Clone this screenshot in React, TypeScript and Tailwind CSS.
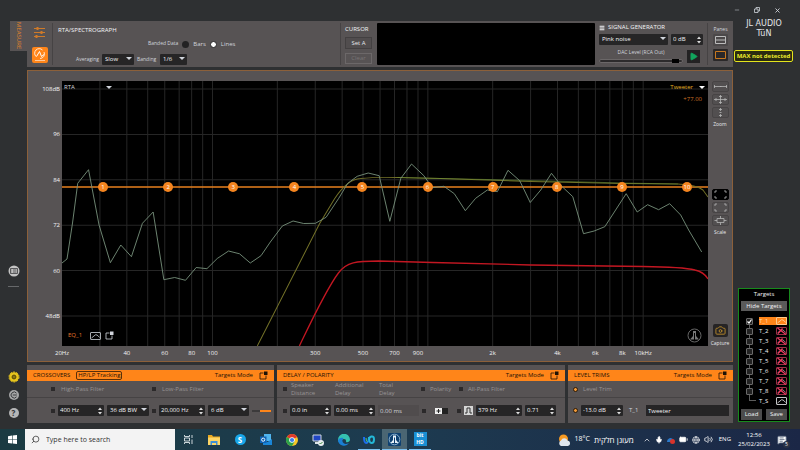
import React, { useState } from 'react';
import { Search, Minus, X, Play, Camera, Menu, Volume2, Mic, BatteryFull, ChevronUp, Globe, MessageSquareText } from 'lucide-react';
import clsx from 'clsx';

type Point = [number, number];

// plot area in svg units
const PLOT_W = 645;
const PLOT_H = 265;

const freqToX = (freq: number) => (Math.log10(freq / 20) / 3) * PLOT_W;
const dbToY = (db: number) => 8 + ((108 - db) / 12) * 45.4;

const gridFreqs = [1, 2, 3, 4, 5, 6, 7, 8, 9].flatMap((n) => [n * 10, n * 100, n * 1000]).concat(10000).filter((f) => f > 20);

const freqLabels = [
    { freq: 20, text: '20Hz' },
    { freq: 40, text: '40' },
    { freq: 60, text: '60' },
    { freq: 80, text: '80' },
    { freq: 100, text: '100' },
    { freq: 300, text: '300' },
    { freq: 500, text: '500' },
    { freq: 700, text: '700' },
    { freq: 900, text: '900' },
    { freq: 2000, text: '2k' },
    { freq: 4000, text: '4k' },
    { freq: 6000, text: '6k' },
    { freq: 8000, text: '8k' },
    { freq: 10000, text: '10kHz' },
];

const dbLabels = [
    { db: 108, text: '108dB' },
    { db: 96, text: '96' },
    { db: 84, text: '84' },
    { db: 72, text: '72' },
    { db: 60, text: '60' },
    { db: 48, text: '48dB' },
];

const rta: Point[] = [
    [0, 182], [5, 178], [10.5, 142], [15.7, 102.3], [26.5, 88.7], [37, 144], [48.3, 181.7], [58.7, 164], [69.3, 175.7],
    [80.3, 142.3], [91, 131], [101.7, 198.7], [112.5, 196.5], [123.3, 199.3], [134, 186.5], [144.7, 187.7], [155, 177.5],
    [166.3, 170], [177.3, 172.8], [188, 182], [198.7, 174.7], [208, 161], [220, 145], [230.7, 140], [241.3, 142.5],
    [253, 142.3], [263.7, 136.3], [276.3, 117.3], [285.3, 102.3], [294.7, 95.3], [305.7, 92], [316.7, 94.7], [327.3, 140.3],
    [338.3, 97.3], [349, 83], [361.3, 94.7], [369.7, 106.7], [381.3, 105.3], [391.7, 112.7], [402.7, 129.7], [413, 117.3],
    [424.7, 109], [434.7, 110.7], [445.3, 89.3], [457, 99.7], [467.5, 121.5], [478, 109], [488.7, 92.3], [498.7, 105],
    [510, 115.7], [520.7, 152.7], [531.3, 150], [542, 145.7], [563.3, 112.7], [574.3, 131], [584.7, 123.7], [595.7, 128.7],
    [606.7, 122.7], [617.7, 134], [625.7, 149], [638.7, 171],
];

const eqNodes = [41, 106, 171, 232, 300, 365, 430, 494, 559, 624];

const targets = ['T_1', 'T_2', 'T_3', 'T_4', 'T_5', 'T_6', 'T_7', 'T_8', 'T_S'];

const Caret: React.FC<{ className?: string }> = ({ className }) => (
    <svg viewBox="0 0 6 3" className={clsx('h-[3px] w-[6px] shrink-0', className)}>
        <path d="M0 0h6L3 3z" fill="currentColor" />
    </svg>
);

const PopOut = () => (
    <svg viewBox="0 0 9 9" className="size-[9px] shrink-0" fill="none">
        <path d="M4.500 2H1v6h6V4.500" stroke="currentColor" strokeWidth=".8" />
        <path d="M5 .5h3.500v3.500H5z" fill="currentColor" />
    </svg>
);

const Select: React.FC<{ id: string; value: string; className?: string }> = ({ id, value, className }) => (
    <div className={clsx('relative shrink-0', className)}>
        <select id={id} aria-label={id} className="block h-[11px] w-full appearance-none rounded-[1px] bg-[#262526] pl-[3px] text-[6px] leading-[11px] text-gray-100">
            <option>{value}</option>
        </select>
        <Caret className="pointer-events-none absolute top-[3px] right-[2px] text-gray-300" />
    </div>
);

const Spin: React.FC<{ label: string; value: string; className?: string }> = ({ label, value, className }) => (
    <div className={clsx('flex h-[11px] shrink-0 items-center rounded-[1px] bg-[#262526] pr-[2px]', className)}>
        <input aria-label={label} defaultValue={value} className="h-[11px] w-0 min-w-0 flex-1 pl-[2px] text-[6px] leading-[11px] text-gray-100" />
        <button title="step" className="flex h-[11px] items-center">
            <svg viewBox="0 0 4 8" className="h-[8px] w-[4px]" fill="#ddd">
                <path d="M0 3l2-2.500L4 3zM0 5l2 2.500L4 5z" />
            </svg>
        </button>
    </div>
);

const Tick: React.FC<{ label: string }> = ({ label }) => (
    <input type="checkbox" aria-label={label} className="size-[4px] shrink-0 appearance-none bg-[#2b292a]" />
);

const Led = () => (
    <input type="checkbox" aria-label="led" defaultChecked className="size-[5px] shrink-0 appearance-none rounded-full border border-[#2b1a08] bg-[#f19a38]" />
);

const ModuleHeader: React.FC<{ title: string; children?: React.ReactNode }> = ({ title, children }) => (
    <div className="mt-[5px] flex h-[11px] items-center gap-[6px] bg-[#ff8519] px-[6px] text-[#1e1206]">
        <h2 className="text-[6px] whitespace-nowrap">{title}</h2>
        {children}
        <span className="ml-auto text-[6px] whitespace-nowrap">Targets Mode</span>
        <PopOut />
    </div>
);

const CurveIcon: React.FC<{ off?: boolean }> = ({ off }) => (
    <svg viewBox="0 0 11 8" className="h-[8px] w-[11px] shrink-0" fill="none">
        <rect x=".5" y=".5" width="10" height="7" rx=".5" stroke={off ? '#c43a58' : 'currentColor'} strokeWidth=".8" />
        <path d="M1.500 6L4 4Q5.500 2 7 3T9.500 5.500" stroke={off ? '#c9a0a8' : 'currentColor'} strokeWidth=".8" />
        {off && <path d="M1.500 1l8.500 6.500M6.500 1.500L2 6.500" stroke="#f03a60" strokeWidth="1.200" />}
    </svg>
);

const Rail = () => (
    <aside className="flex w-[27px] shrink-0 flex-col items-center pt-[21px] pb-[10px] text-[#bdbdbd]">
        <button className="flex h-[30px] w-[17px] items-center justify-center self-end bg-[#575354] text-[6px] leading-[8px] text-[#e0842c] [writing-mode:vertical-rl]">
            MEASURE
        </button>
        <button title="list" className="mt-auto">
            <svg viewBox="0 0 12 12" className="size-[12px]">
                <circle cx="6" cy="6" r="5.500" fill="#c4c4c4" />
                <path d="M2.500 3.500h7v5h-7zM5 5h3.500M5 7h3.500M3.500 5h.6M3.500 7h.6" stroke="#3d3e40" strokeWidth=".8" fill="none" />
            </svg>
        </button>
        <hr className="mt-[9px] mb-[84px] w-[11px] border-[#66686a]" />
        <div className="flex flex-col gap-[6px]">
            <button title="settings">
                <svg viewBox="0 0 12 12" className="size-[12px]" fill="none">
                    <circle cx="6" cy="6" r="4.800" fill="#e8c51c" />
                    <circle cx="6" cy="6" r="5" stroke="#e8c51c" strokeDasharray="2 1.140" />
                    <circle cx="6" cy="6" r="2" fill="#4a3d06" stroke="#6e5c0c" />
                    <circle cx="6" cy="6" r=".8" fill="#e8c51c" />
                </svg>
            </button>
            <button title="connect">
                <svg viewBox="0 0 12 12" className="size-[12px]" fill="none">
                    <circle cx="6" cy="6" r="5" fill="#a5a6a7" />
                    <path d="M8.500 4.200A3 3 0 1 0 8.500 7.800M4.800 6h4" stroke="#3b3d3f" />
                </svg>
            </button>
            <button title="help" className="flex size-[12px] items-center justify-center">
                <span className="flex size-[10px] items-center justify-center rounded-full bg-[#b5b6b7] text-[8px] leading-[10px] font-bold text-[#2e3032]">?</span>
            </button>
        </div>
    </aside>
);

const TopBar = () => (
    <header className="flex h-[46px] bg-[#575354] py-[2px]">
        <div className="flex w-[26px] shrink-0 flex-col items-center justify-between border-r border-[#464344] py-[2px]">
            <button title="mixer">
                <svg viewBox="0 0 13 14" className="h-[14px] w-[13px]" fill="none" stroke="#cf7a28">
                    <path d="M1 3.500h11M1 7.500h11M1 11.500h11" />
                    <path d="M4.500 2v3M8.500 6v3M3.500 10v3" strokeWidth="2" />
                </svg>
            </button>
            <button title="spectrograph">
                <svg viewBox="0 0 16 16" className="size-[16px]" fill="none" stroke="#fff">
                    <rect width="16" height="16" rx="2" fill="#ff8519" stroke="none" />
                    <path d="M4 9.500A4.500 4.500 0 0 1 10.500 3M12 5a4.500 4.500 0 0 1-4 6.500" strokeWidth=".8" />
                    <path d="M4.500 9.500L7.500 4.500l2 5 2.500-2" />
                    <path d="M3 13.500h10" strokeWidth=".8" strokeOpacity=".7" />
                </svg>
            </button>
        </div>

        <section className="flex w-[288px] shrink-0 flex-col gap-[6px] border-r border-[#464344] pt-[3px] pl-[5px] text-gray-300">
            <h1 className="text-[6px] leading-[8px] text-gray-100">RTA/SPECTROGRAPH</h1>
            <div className="flex h-[8px] items-center pl-[90px] text-[6px]">
                <span className="text-[5px]">Banded Data</span>
                <label className="ml-[4px] flex items-center gap-[4px]">
                    <input type="radio" name="band" className="size-[7px] appearance-none rounded-full bg-[#232223]" />
                    Bars
                </label>
                <label className="ml-[4px] flex items-center gap-[4px]">
                    <input type="radio" name="band" defaultChecked className="size-[7px] appearance-none rounded-full border border-[#232223] bg-white" />
                    Lines
                </label>
            </div>
            <div className="flex items-center pl-[18px] text-[5px]">
                <label htmlFor="averaging" className="w-[26px]">Averaging</label>
                <Select id="averaging" value="Slow" className="w-[32px]" />
                <label htmlFor="banding" className="w-[26px] pl-[3px]">Banding</label>
                <Select id="banding" value="1/6" className="w-[27px]" />
            </div>
        </section>

        <section className="flex w-[36px] shrink-0 flex-col gap-[4px] pt-[2px] pl-[4px]">
            <h2 className="text-[6px] leading-[8px] text-gray-100">CURSOR</h2>
            <button className="h-[12px] w-[27px] border border-[#434041] bg-[#514d4e] text-[6px] leading-[10px] text-gray-200">Set A</button>
            <button disabled className="h-[11px] w-[27px] border border-[#6c6869] text-[6px] leading-[9px] text-[#777374]">Clear</button>
        </section>

        <div className="flex-1 rounded-[1px] bg-black" />

        <section className="flex w-[112px] shrink-0 flex-col pl-[4px]">
            <h2 className="flex h-[9px] items-center gap-[3px] text-[6px] whitespace-nowrap text-gray-100">
                <Menu size={6} strokeWidth={4} />
                SIGNAL GENERATOR
            </h2>
            <div className="mt-[2px] flex gap-[3px]">
                <Select id="signal" value="Pink noise" className="w-[69px]" />
                <Spin label="level" value="0 dB" className="w-[32px]" />
            </div>
            <div className="mt-[4px] flex items-center justify-between pr-[7px]">
                <label className="flex w-[84px] flex-col items-center gap-[3px] text-[5px] leading-[7px] text-gray-300">
                    DAC Level (RCA Out)
                    <input
                        type="range"
                        defaultValue={96}
                        className="h-[4px] w-full appearance-none rounded-full border border-[#6b6768] bg-[#2d2b2c] [&::-webkit-slider-thumb]:h-[4px] [&::-webkit-slider-thumb]:w-[7px] [&::-webkit-slider-thumb]:appearance-none [&::-webkit-slider-thumb]:bg-black"
                    />
                </label>
                <button title="play" className="flex size-[13px] items-center justify-center bg-[#232223]">
                    <Play size={9} className="fill-[#12a45c] text-[#12a45c]" />
                </button>
            </div>
        </section>

        <section className="flex w-[26px] shrink-0 flex-col items-center border-l border-[#464344] pt-[2px] text-gray-300">
            <h2 className="text-[5px] leading-[8px]">Panes</h2>
            <button title="split" className="mt-px">
                <svg viewBox="0 0 15 12" className="h-[12px] w-[15px]" fill="#4b4849" stroke="#bbb">
                    <rect width="15" height="12" rx="1" stroke="none" />
                    <path d="M2.500 2.500h10v7h-10zM2.500 6h10" />
                </svg>
            </button>
            <button title="single" className="mt-[3px]">
                <svg viewBox="0 0 15 12" className="h-[12px] w-[15px]" fill="#2a2829" stroke="#c8781f">
                    <rect width="15" height="12" rx="1" stroke="none" />
                    <path d="M2.500 2.500h10v7h-10z" />
                </svg>
            </button>
        </section>
    </header>
);

const Plot = () => (
    <div className="relative overflow-hidden bg-black">
        <svg viewBox={`0 0 ${PLOT_W} ${PLOT_H}`} preserveAspectRatio="none" className="absolute inset-0 h-full w-full" fill="none">
            <g stroke="#262626">
                {gridFreqs.map((freq) => (
                    <path key={freq} d={`M${freqToX(freq)} 0V${PLOT_H}`} />
                ))}
                {dbLabels.map(({ db }) => (
                    <path key={db} d={`M0 ${dbToY(db)}H${PLOT_W}`} />
                ))}
            </g>
            <path d="M0 106H645" stroke="#e8801e" strokeWidth="1.500" />
            <path d="M195 265L257 143L272 118Q285 98 298 97.500Q312 96 335 96.500L378 97.500L468 100.500L560 102.500L615 103Q634 104 640 109L645 116" stroke="#737128" />
            <path d="M335 96.500L378 97.500L468 99.500L560 102L615 103" stroke="#6d9a3c" strokeOpacity=".5" />
            <path d="M237 265C250 238 264 208 276 192C284 181 294 180 316 180L370 181.500L468 184L580 185.500Q620 186 632 189Q641 191 645 198" stroke="#c31722" strokeWidth="1.300" />
            <path d={`M${rta.map((p) => p.join(' ')).join('L')}`} stroke="#77917c" strokeWidth=".9" />
        </svg>

        {eqNodes.map((x, index) => (
            <button
                key={x}
                style={{ left: `${(x / PLOT_W) * 100}%` }}
                className="absolute top-[40%] flex size-[10px] -translate-x-1/2 -translate-y-1/2 items-center justify-center rounded-full bg-[#f5851f] text-[6px] leading-[10px] text-white"
            >
                {index + 1}
            </button>
        ))}

        <div className="absolute inset-x-[2px] top-[2px] flex items-start justify-between text-[6px] leading-[8px]">
            <button className="flex items-center gap-[31px] text-gray-300">
                RTA
                <Caret />
            </button>
            <div className="flex flex-col items-end gap-[4px] pr-px">
                <button className="flex items-center gap-[6px] text-[#e0ae22]">
                    Tweeter
                    <Caret className="text-white" />
                </button>
                <span className="pr-[3px] text-[#cc7326]">+77.00</span>
            </div>
        </div>

        <div className="absolute inset-x-[6px] bottom-[3px] flex items-center text-[6px] text-gray-300">
            <span className="w-[22px] text-[#e0762a]">EQ_1</span>
            <CurveIcon />
            <span className="ml-[4px]"><PopOut /></span>
            <svg viewBox="0 0 15 15" className="ml-auto size-[15px]" fill="none">
                <circle cx="7.500" cy="7.500" r="6.500" stroke="#666" />
                <path d="M6 3h3v5l3 3.500H8V5H7v6.500H3L6 8z" fill="#777" />
            </svg>
        </div>
    </div>
);

const ToolButton: React.FC<{ title: string; dark?: boolean; d: string }> = ({ title, dark, d }) => (
    <button title={title} className={clsx('rounded-[2px] border', dark ? 'border-black bg-black' : 'border-[#474445] bg-[#524f50]')}>
        <svg viewBox="0 0 15 9" className="h-[9px] w-[15px]" fill="none" stroke="#b5b5b5" strokeWidth=".8">
            <path d={d} />
        </svg>
    </button>
);

const ChartPanel = () => (
    <section className="grid flex-1 grid-cols-[34px_1fr_24px] grid-rows-[1fr_15px] border border-[#8c603a] bg-[#575354] pt-[10px] text-[6px] text-gray-100">
        <div className="relative">
            {dbLabels.map(({ db, text }) => (
                <span key={db} style={{ top: `${(dbToY(db) / PLOT_H) * 100}%` }} className="absolute right-[2px] -translate-y-1/2 leading-[8px] font-medium">
                    {text}
                </span>
            ))}
        </div>
        <Plot />
        <div className="row-span-2 flex flex-col items-center text-[5px] leading-[8px] text-gray-200">
            <div className="flex flex-col items-center gap-[2px]">
                <ToolButton title="zoom x" d="M1 4.500h4M10 4.500h4M1.500 3v3M13.500 3v3M7 4.500h1.500M5 4.500h5" />
                <ToolButton title="zoom both" d="M1 4.500h13M7.500 0v9M3 3v3M12 3v3M6 1.500h3M6 7.500h3" />
                <ToolButton title="zoom y" d="M7.500 0v3M7.500 6v3M6 1.500h3M6 7.500h3M6.500 4.500h2" />
                Zoom
            </div>
            <div className="mt-[61px] flex flex-col items-center gap-[2px]">
                <ToolButton title="full" dark d="M2 3V1h2M11 1h2v2M13 6v2h-2M4 8H2V6" />
                <ToolButton title="fit" d="M2 3V1h2M11 1h2v2M13 6v2h-2M4 8H2V6" />
                <ToolButton title="scale" d="M4 2.500h7v4H4zM7.500 0v2.500M7.500 6.500V9M1.500 4.500H4M11 4.500h2.500" />
                Scale
            </div>
            <button className="mt-auto mb-[14px] flex flex-col items-center gap-[2px]">
                <span className="flex h-[13px] w-[15px] items-center justify-center rounded-[2px] bg-[#262425]">
                    <Camera size={11} className="text-[#b98a2c]" />
                </span>
                Capture
            </button>
        </div>
        <div className="relative col-start-2">
            {freqLabels.map(({ freq, text }) => (
                <span key={freq} style={{ left: `${(freqToX(freq) / PLOT_W) * 100}%` }} className="absolute top-[3px] -translate-x-1/2 leading-[8px] font-medium">
                    {text}
                </span>
            ))}
        </div>
    </section>
);

const Modules = () => (
    <div className="grid grid-cols-[247px_1fr_165px] gap-[3px] text-[6px]">
        <section className="bg-[#575354]">
            <ModuleHeader title="CROSSOVERS">
                <span className="rounded-[2px] border border-[#5a300a] px-px text-[6px] leading-[7px] whitespace-nowrap">HP/LP Tracking</span>
            </ModuleHeader>
            <div className="flex h-[17px] items-center border-b border-[#464344] pl-[24px] text-[#989495]">
                <label className="flex w-[101px] items-center gap-[6px]"><Tick label="hp" />High-Pass Filter</label>
                <label className="flex items-center gap-[6px]"><Tick label="lp" />Low-Pass Filter</label>
            </div>
            <div className="flex h-[25px] items-center gap-[3px] pl-[24px]">
                <Tick label="hp on" />
                <Spin label="high pass" value="400 Hz" className="w-[46px]" />
                <Select id="hp-slope" value="36 dB BW" className="w-[42px]" />
                <Tick label="lp on" />
                <Spin label="low pass" value="20,000 Hz" className="w-[46px]" />
                <Select id="lp-slope" value="6 dB" className="w-[41px]" />
                <svg viewBox="0 0 19 4" className="h-[4px] w-[19px]">
                    <path d="M0 2h8" stroke="#222" />
                    <path d="M8 2h11" stroke="#ff8519" strokeWidth="2" />
                </svg>
            </div>
        </section>

        <section className="bg-[#575354]">
            <ModuleHeader title="DELAY / POLARITY" />
            <div className="flex h-[17px] items-center border-b border-[#464344] pl-[6px] leading-[8px] text-[#989495]">
                <label className="flex w-[52px] items-center gap-[4px]"><Tick label="speaker" /><span>Speaker<br />Distance</span></label>
                <span className="w-[44px]">Additional<br />Delay</span>
                <span className="w-[42px]">Total<br />Delay</span>
                <label className="flex w-[38px] items-center gap-[5px]"><Tick label="polarity" />Polarity</label>
                <label className="flex items-center gap-[5px]"><Tick label="all pass" />All-Pass Filter</label>
            </div>
            <div className="flex h-[25px] items-center gap-[3px] pl-[6px]">
                <Tick label="delay on" />
                <Spin label="speaker distance" value="0.0 in" className="w-[41px]" />
                <Spin label="additional delay" value="0.00 ms" className="w-[41px]" />
                <input aria-label="total delay" readOnly value="0.00 ms" className="h-[11px] w-[41px] bg-[#504c4d] pl-[2px] text-gray-300" />
                <Tick label="polarity on" />
                <button title="invert" className="mx-[6px]">
                    <svg viewBox="0 0 13 6" className="h-[6px] w-[13px]">
                        <path d="M0 0h7v6H0z" fill="#eee" />
                        <path d="M7 0h6v6H7z" fill="#222" />
                        <path d="M1.500 3h4M3.500 1v4" stroke="#222" />
                    </svg>
                </button>
                <Tick label="all pass on" />
                <svg viewBox="0 0 9 9" className="size-[9px]" fill="none">
                    <path d="M0 0h9v9H0z" fill="#d6d6d6" />
                    <path d="M1 7h2V2h3v5h2" stroke="#333" />
                </svg>
                <Spin label="all pass" value="379 Hz" className="w-[46px]" />
                <Spin label="q" value="0.71" className="w-[31px]" />
            </div>
        </section>

        <section className="bg-[#575354]">
            <ModuleHeader title="LEVEL TRIMS" />
            <div className="flex h-[17px] items-center border-b border-[#464344] pl-[5px] text-[#989495]">
                <label className="flex items-center gap-[5px]"><Led />Level Trim</label>
            </div>
            <div className="flex h-[25px] items-center gap-[3px] pr-[4px] pl-[5px]">
                <Led />
                <Spin label="level trim" value="-13.0 dB" className="w-[42px]" />
                <label htmlFor="target-name" className="w-[17px] pl-[3px] text-gray-300">T_1</label>
                <input id="target-name" defaultValue="Tweeter" className="h-[11px] w-0 min-w-0 flex-1 bg-[#262526] pl-[2px] text-gray-100" />
            </div>
        </section>
    </div>
);

const TargetsPanel = () => {
    const [selected, setSelected] = useState<string>('T_1');

    return (
        <section className="mt-auto ml-[5px] w-[52px] border border-[#178a1c] bg-black px-[2px] pb-px text-[6px] text-gray-100">
            <h2 className="mt-px text-center leading-[8px]">Targets</h2>
            <button className="mt-[3px] block h-[10px] w-full bg-[#5a5a5a] leading-[10px]">Hide Targets</button>
            <ul className="relative mt-[5px] pl-[5px]">
                <li className="absolute top-[5px] left-[8px] h-[80px] w-[7px] border-b border-l border-[#5c5c5c]" />
                {targets.map((name) => (
                    <li key={name} className="relative flex h-[10px] items-center gap-[6px]">
                        {name === 'T_S' ? (
                            <span className="w-[7px]" />
                        ) : (
                            <label className="relative flex size-[7px] items-center justify-center">
                                <input
                                    type="checkbox"
                                    aria-label={name}
                                    defaultChecked={name === 'T_1'}
                                    className="peer size-[7px] appearance-none rounded-[1px] border border-[#6a6a6a] bg-[#222]"
                                />
                                <svg viewBox="0 0 7 7" className="absolute inset-0 hidden size-[7px] peer-checked:block" fill="none">
                                    <path d="M1.500 3.500L3 5l2.500-3.500" stroke="#fff" strokeWidth="1.200" />
                                </svg>
                            </label>
                        )}
                        <button
                            onClick={() => setSelected(name)}
                            className={clsx('flex h-[8px] flex-1 items-center justify-between leading-[8px]', name === selected && 'bg-[#ff8519] text-[#ffd9a8]')}
                        >
                            {name}
                            <CurveIcon off={name !== 'T_1' && name !== 'T_S'} />
                        </button>
                    </li>
                ))}
            </ul>
            <div className="mt-[3px] flex justify-between">
                <button className="h-[11px] w-[21px] bg-[#4c4c4c] leading-[11px]">Load</button>
                <button className="h-[11px] w-[21px] bg-[#4c4c4c] leading-[11px]">Save</button>
            </div>
        </section>
    );
};

const RightColumn = () => (
    <aside className="flex w-[67px] shrink-0 flex-col pb-[7px] text-gray-300">
        <div className="flex h-[20px] items-center gap-[14px] pr-[19px] pl-px">
            <button title="minimize"><Minus size={6} /></button>
            <button title="restore">
                <svg viewBox="0 0 6 6" className="size-[6px]" fill="none" stroke="currentColor" strokeWidth=".8">
                    <path d="M.5 2h3.500v3.500H.5zM2 2V.5h3.500V4H4" />
                </svg>
            </button>
            <button title="close"><X size={7} strokeWidth={3} /></button>
        </div>
        <div className="flex flex-col items-center gap-[2px] pr-[5px] font-['DejaVu_Sans',sans-serif] text-[8px] leading-[8px] text-gray-200">
            <span>JL AUDIO</span>
            <span>TüN</span>
        </div>
        <div className="mt-[12px] mr-[7px] ml-px h-[12px] rounded-[2px] border border-[#e4e41c] bg-[#2b2c10] text-center text-[6px] leading-[10px] font-bold whitespace-nowrap text-[#eaea2c]">
            MAX not detected
        </div>
        <TargetsPanel />
    </aside>
);

const Taskbar = () => (
    <footer className="flex h-[21px] items-center bg-linear-to-r from-[#1b3b42] via-[#1d3b50] to-[#1b2746] text-[6px] text-white">
        <button title="Start" className="flex h-full w-[25px] items-center justify-center">
            <svg viewBox="0 0 9 9" className="size-[9px]" fill="#fff">
                <path d="M0 1.200l4-.6v3.700H0zM4.600.5L9 0v4.300H4.600zM0 4.800h4v3.700l-4-.6zM4.600 4.800H9V9l-4.400-.5z" />
            </svg>
        </button>
        <label className="flex h-full w-[150px] items-center gap-[6px] bg-[#f3f3f3] pl-[6px] text-[#333]">
            <Search size={9} className="-scale-x-100" />
            <input placeholder="Type here to search" className="w-0 min-w-0 flex-1 text-[7px] leading-[12px] placeholder:text-[#333]" />
        </label>
        <div className="flex h-full items-center">
            <button title="Task view" className="flex h-full w-[26px] items-center justify-center">
                <svg viewBox="0 0 9 9" className="size-[9px]" fill="none" stroke="#dfe6ea">
                    <path d="M.5 0v1.500h5V0M.5 3h5v3h-5zM.5 9V7.500h5V9M8 0v3M8 4.500V9" strokeWidth=".9" />
                </svg>
            </button>
            <button title="Explorer" className="flex h-full w-[26px] items-center justify-center">
                <svg viewBox="0 0 12 10" className="h-[10px] w-[12px]">
                    <path d="M0 0h4l1 1.500h7V10H0z" fill="#e8a820" />
                    <path d="M0 2.500h12V10H0z" fill="#fbd566" />
                    <path d="M2.500 6h7v4H8V8H4v2H2.500z" fill="#3d8fd6" />
                </svg>
            </button>
            <button title="Skype" className="flex h-full w-[26px] items-center justify-center">
                <span className="flex size-[11px] items-center justify-center rounded-full bg-[#19a7ea] text-[8px] leading-[11px] font-bold">S</span>
            </button>
            <button title="Outlook" className="flex h-full w-[26px] items-center justify-center">
                <svg viewBox="0 0 12 11" className="h-[11px] w-[12px]">
                    <path d="M4 0h7v7H4z" fill="#50b5ef" />
                    <path d="M3 5l4.500 3L12 5v6H3z" fill="#1a86d8" />
                    <path d="M0 2.500h6.500V9H0z" fill="#0f63b5" />
                    <circle cx="3.200" cy="5.700" r="1.600" stroke="#fff" fill="none" strokeWidth=".9" />
                </svg>
            </button>
            <button title="Chrome" className="flex h-full w-[26px] items-center justify-center">
                <svg viewBox="0 0 12 12" className="size-[12px]">
                    <circle cx="6" cy="6" r="6" fill="#f6c526" />
                    <path d="M6 6L.8 3A6 6 0 0 1 11.200 3z" fill="#e0392b" />
                    <path d="M6 6L.8 3A6 6 0 0 0 6 12l2.600-4.500z" fill="#2ba24c" />
                    <circle cx="6" cy="6" r="2.800" fill="#fff" />
                    <circle cx="6" cy="6" r="2.100" fill="#3a7de8" />
                </svg>
            </button>
            <button title="Remote" className="flex h-full w-[26px] items-center justify-center">
                <svg viewBox="0 0 12 12" className="size-[12px]">
                    <path d="M1 1h8v6H1z" fill="#2046c4" stroke="#cfd6dd" />
                    <path d="M3 8h4v2H3z" fill="#dde3e8" />
                    <circle cx="9" cy="9" r="3" fill="#e8edf0" />
                    <path d="M7.500 9l1 1 2-2" stroke="#3c8a3f" fill="none" />
                </svg>
            </button>
            <button title="Edge" className="flex h-full w-[26px] items-center justify-center">
                <svg viewBox="0 0 12 12" className="size-[12px]">
                    <path d="M0 6a6 6 0 0 1 12-.5C12 8 9.500 8.500 8 8q.6-3-2-3T2.500 9Q0 8 0 6z" fill="#35c1b0" />
                    <path d="M0 6Q2 3 5.500 4 3.500 6 5 8.500T11 9A6 6 0 0 1 0 6z" fill="#1a7fd4" />
                </svg>
            </button>
            <button title="Webex" className="ml-px flex h-full w-[22px] items-center justify-center border-b border-[#7cc1f0]">
                <svg viewBox="0 0 12 9" className="h-[9px] w-[12px]" fill="none" strokeWidth="2">
                    <path d="M1 2q0 6 2.300 6T6 2" stroke="#1c6ef0" />
                    <path d="M6 2q0 6 2.500 6T11 4.500 8.500 1.500 6 5" stroke="#24b8d8" />
                    <path d="M3 3q.5 5 2 3.500" stroke="#4ad07c" strokeWidth="1" />
                </svg>
            </button>
            <button title="TuN" className="ml-[2px] flex h-full w-[25px] items-center justify-center border-b border-[#7cc1f0] bg-[#4b6673]">
                <svg viewBox="0 0 13 13" className="size-[13px]">
                    <rect width="13" height="13" rx="1" fill="#0e4070" />
                    <circle cx="6.500" cy="6.500" r="5.300" stroke="#a9cbe4" fill="none" strokeWidth=".8" />
                    <path d="M5 2.500h3v4.500l2.500 3H7V4.500H6V10H2.500L5 7z" fill="#e8f2fa" />
                </svg>
            </button>
            <button title="bit HD" className="ml-[2px] flex h-full w-[22px] items-center justify-center border-b border-[#7cc1f0]">
                <span className="flex h-[14px] w-[13px] flex-col items-center justify-center bg-[#1a8fd4] text-[5px] leading-[7px] font-bold">
                    <span>bit</span>
                    <span>HD</span>
                </span>
            </button>
        </div>

        <div className="ml-auto flex h-full items-center">
            <svg viewBox="0 0 13 12" className="h-[12px] w-[13px]">
                <circle cx="5.500" cy="5" r="4.500" fill="#f59a23" />
                <path d="M3 12a3 3 0 0 1 0-5.500 3.500 3.500 0 0 1 6.500 0A2.800 2.800 0 0 1 10 12z" fill="#dfe6ee" />
            </svg>
            <span className="ml-[3px] text-[7px]">18°C</span>
            <span dir="rtl" className="ml-[4px] text-[8px] whitespace-nowrap">מעונן חלקית</span>
            <div className="ml-[9px] flex items-center gap-[4px]">
                <ChevronUp size={8} />
                <Mic size={8} className="fill-white" />
                <svg viewBox="0 0 8 8" className="size-[8px]">
                    <path d="M0 6q0-3 3-4 3 0 4 3v1z" fill="#2b79c9" />
                    <circle cx="5.500" cy="5.500" r="2.500" fill="#d9342b" />
                </svg>
                <BatteryFull size={9} className="fill-white" />
                <Globe size={8} />
                <Volume2 size={9} />
            </div>
            <span className="ml-[6px]">ENG</span>
            <div className="ml-[6px] flex w-[34px] flex-col items-center leading-[9px] whitespace-nowrap">
                <span>12:56</span>
                <span>25/02/2023</span>
            </div>
            <button title="Notifications" className="relative mr-[13px] ml-[6px] flex h-full items-center">
                <MessageSquareText size={10} className="fill-white text-[#5a6780]" />
                <span className="absolute -right-[3px] bottom-[2px] flex size-[7px] items-center justify-center rounded-full bg-[#2b3346] text-[5px] leading-[7px]">5</span>
            </button>
        </div>
    </footer>
);

const App: React.FC = () => {
    return (
        <div className="flex min-h-screen flex-col bg-[#2e3032] font-['Open_Sans','Noto_Sans',sans-serif]">
            <div className="flex flex-1">
                <Rail />
                <main className="flex min-w-0 flex-1 flex-col gap-[3px] pt-[21px] pb-[6px]">
                    <TopBar />
                    <ChartPanel />
                    <Modules />
                </main>
                <RightColumn />
            </div>
            <Taskbar />
        </div>
    );
};

export default App;
